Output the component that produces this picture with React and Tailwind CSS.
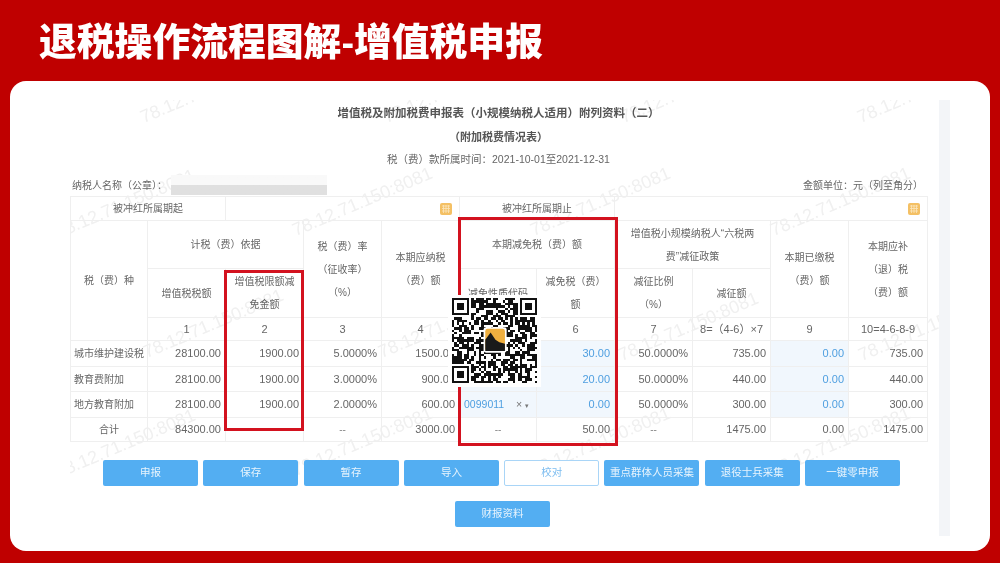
const FONT = "font-['Liberation_Sans','Noto_Sans_CJK_SC',sans-serif]"

const marks = [
  [75, 27], [318, 27], [555, 27], [792, 27],
  [-10, 142], [227, 140], [465, 140], [705, 140],
  [78, 262], [313, 262], [553, 265], [793, 265],
  [-10, 382], [227, 380], [465, 380], [705, 380],
]

const rows = [
  { name: "城市维护建设税", base: "28100.00", limit: "1900.00", rate: "5.0000%", due: "1500.00", code: "", cut: "30.00", ratio: "50.0000%", less: "735.00", paid: "0.00", left: "735.00" },
  { name: "教育费附加", base: "28100.00", limit: "1900.00", rate: "3.0000%", due: "900.00", code: "", cut: "20.00", ratio: "50.0000%", less: "440.00", paid: "0.00", left: "440.00" },
  { name: "地方教育附加", base: "28100.00", limit: "1900.00", rate: "2.0000%", due: "600.00", code: "0099011", cut: "0.00", ratio: "50.0000%", less: "300.00", paid: "0.00", left: "300.00" },
]

const buttons = ["申报", "保存", "暂存", "导入", "校对", "重点群体人员采集", "退役士兵采集", "一键零申报"]

// fake qr modules, same every render
const QR_SIZE = 35
function qrCells() {
  const cells = []
  let seed = 7919
  for (let y = 0; y < QR_SIZE; y++) {
    for (let x = 0; x < QR_SIZE; x++) {
      seed = (seed * 1103515245 + 12345) & 0x7fffffff
      const inFinder = (x < 8 && y < 8) || (x >= QR_SIZE - 8 && y < 8) || (x < 8 && y >= QR_SIZE - 8)
      if (!inFinder && (seed >> 16) % 100 < 56) cells.push(`M${x} ${y}h1v1h-1z`)
    }
  }
  return cells.join("")
}

function Finder({ x, y }) {
  return (
    <g>
      <rect x={x} y={y} width="7" height="7" fill="#111" />
      <rect x={x + 1} y={y + 1} width="5" height="5" fill="#fff" />
      <rect x={x + 2} y={y + 2} width="3" height="3" fill="#111" />
    </g>
  )
}

function QrCode() {
  return (
    <svg viewBox={`0 0 ${QR_SIZE} ${QR_SIZE}`} className="block h-[85px] w-[85px] blur-[0.3px]" shapeRendering="crispEdges">
      <path d={qrCells()} fill="#111" />
      <Finder x={0} y={0} />
      <Finder x={QR_SIZE - 7} y={0} />
      <Finder x={0} y={QR_SIZE - 7} />
      <g shapeRendering="auto">
        <rect x="13" y="12" width="9.5" height="10.5" rx="1" fill="#fff" />
        <rect x="13.7" y="12.7" width="8.1" height="9.1" rx="1" fill="#f0b040" />
        <path d="M13.7 21.800v-4.600l2.200-3 2 3 1.600 1 2.300.6v3z" fill="#1a1a1a" />
      </g>
    </svg>
  )
}

function CalendarIcon() {
  return (
    <svg viewBox="0 0 12 12" className="h-3 w-3">
      <rect width="12" height="12" rx="2" fill="#f4c064" />
      <path d="M2 3h8M2 5.500h8M2 8h8M3.500 2v8M6 2v8M8.500 2v8" stroke="#fbe6bd" strokeWidth="0.8" />
    </svg>
  )
}

function Head({ children, className = "", ...props }) {
  return (
    <td {...props} className={`border border-[#efefef] px-1 text-center align-middle text-[10px] leading-[23px] font-normal text-[#666] ${className}`}>
      {children}
    </td>
  )
}

function Num({ children }) {
  return (
    <td className="border border-[#efefef] pr-1 text-right align-middle text-[11px] text-[#666]">
      {children}
    </td>
  )
}

function Input({ children }) {
  return (
    <td className="border border-[#efefef] bg-[#f1f7fd] pr-1 text-right align-middle text-[11px] text-[#4f9fe0]">
      {children}
    </td>
  )
}

export default function App() {
  return (
    <div className={`flex h-[563px] w-[1000px] flex-col overflow-hidden bg-[#bf0000] ${FONT}`}>
      <header className="flex h-[81px] items-center pt-[5px] pl-[39px]">
        <h1 className="text-[37.800px] leading-none font-black text-white blur-[0.3px]">退税操作流程图解-增值税申报</h1>
      </header>

      <main className="relative mx-[10px] h-[470px] overflow-hidden rounded-2xl bg-white">
        {/* watermark */}
        <div className="pointer-events-none absolute top-[19px] left-[60px] h-[436px] w-[880px] overflow-hidden blur-[0.4px]">
          {marks.map(([x, y]) => (
            <span
              key={`${x}-${y}`}
              className="absolute origin-bottom-left -rotate-[23deg] text-[18px] leading-5 whitespace-nowrap text-[#f0f0f0]"
              style={{ left: x, top: y - 20 }}
            >
              78.12.71.150:8081
            </span>
          ))}
        </div>

        <div className="relative flex gap-[12px] pt-[19px] pl-[60px]">
          <div className="w-[857px] blur-[0.5px]">
            <div className="flex h-[28px] items-center justify-center text-[11.500px] font-bold text-[#555]">
              增值税及附加税费申报表（小规模纳税人适用）附列资料（二）
            </div>
            <div className="flex h-[18px] items-center justify-center text-[11px] font-bold text-[#555]">（附加税费情况表）</div>
            <div className="flex h-[28px] items-center justify-center text-[10.500px] text-[#666]">
              税（费）款所属时间：2021-10-01至2021-12-31
            </div>
            <div className="flex h-[22px] items-center justify-between pr-[4px] pl-[2px] text-[10px] text-[#666]">
              <div className="flex items-center gap-[4px]">
                <span>纳税人名称（公章）：</span>
                <div className="h-[20px] w-[156px] bg-gradient-to-b from-[#f9f9f9] from-50% to-[#e0e0e0] to-50%" />
              </div>
              <span>金额单位：元（列至角分）</span>
            </div>

            <table className="w-[857px] table-fixed border-collapse">
              <colgroup>
                <col className="w-[77px]" />
                <col className="w-[78px]" />
                <col className="w-[78px]" />
                <col className="w-[78px]" />
                <col className="w-[78px]" />
                <col className="w-[77px]" />
                <col className="w-[78px]" />
                <col className="w-[78px]" />
                <col className="w-[78px]" />
                <col className="w-[78px]" />
                <col className="w-[79px]" />
              </colgroup>
              <tbody>
                <tr className="h-[24px]">
                  <Head colSpan={2}>被冲红所属期起</Head>
                  <td colSpan={3} className="border border-[#efefef] pr-[7px] align-middle">
                    <div className="flex justify-end"><CalendarIcon /></div>
                  </td>
                  <Head colSpan={2}>被冲红所属期止</Head>
                  <td colSpan={4} className="border border-y-[#efefef] border-r-[#efefef] border-l-transparent pr-[7px] align-middle">
                    <div className="flex justify-end"><CalendarIcon /></div>
                  </td>
                </tr>
                <tr className="h-[48px]">
                  <Head rowSpan={3}>税（费）种</Head>
                  <Head colSpan={2}>计税（费）依据</Head>
                  <Head rowSpan={2}>税（费）率<br />（征收率）<br />（%）</Head>
                  <Head rowSpan={2}>本期应纳税<br />（费）额</Head>
                  <Head colSpan={2}>本期减免税（费）额</Head>
                  <Head colSpan={2}>增值税小规模纳税人“六税两<br />费”减征政策</Head>
                  <Head rowSpan={2}>本期已缴税<br />（费）额</Head>
                  <Head rowSpan={2}>本期应补<br />（退）税<br />（费）额</Head>
                </tr>
                <tr className="h-[49px]">
                  <Head>增值税税额</Head>
                  <Head>增值税限额减<br />免金额</Head>
                  <Head>减免性质代码</Head>
                  <Head>减免税（费）<br />额</Head>
                  <Head>减征比例<br />（%）</Head>
                  <Head>减征额</Head>
                </tr>
                <tr className="h-[23px]">
                  {["1", "2", "3", "4", "5", "6", "7", "8=（4-6）×7", "9", "10=4-6-8-9"].map((n) => (
                    <td key={n} className="border border-[#efefef] text-center align-middle text-[11px] text-[#666]">{n}</td>
                  ))}
                </tr>
                {rows.map((r, i) => (
                  <tr key={r.name} className={i === 1 ? "h-[25px]" : "h-[26px]"}>
                    <td className="border border-[#efefef] pl-[3px] align-middle text-[10px] whitespace-nowrap text-[#666]">{r.name}</td>
                    <Num>{r.base}</Num>
                    <Num>{r.limit}</Num>
                    <Num>{r.rate}</Num>
                    <Num>{r.due}</Num>
                    <td className="border border-[#efefef] bg-[#f1f7fd] px-[4px] align-middle text-[10.500px] text-[#4f9fe0]">
                      {r.code && (
                        <div className="flex items-center justify-between">
                          <span>{r.code}</span>
                          <span className="pr-[3px] text-[#777]">× <span className="text-[7px]">▾</span></span>
                        </div>
                      )}
                    </td>
                    <Input>{r.cut}</Input>
                    <Num>{r.ratio}</Num>
                    <Num>{r.less}</Num>
                    <Input>{r.paid}</Input>
                    <Num>{r.left}</Num>
                  </tr>
                ))}
                <tr className="h-[24px]">
                  <td className="border border-[#efefef] text-center align-middle text-[10px] text-[#666]">合计</td>
                  <Num>84300.00</Num>
                  <Num />
                  <td className="border border-[#efefef] text-center align-middle text-[10px] text-[#888]">--</td>
                  <Num>3000.00</Num>
                  <td className="border border-[#efefef] text-center align-middle text-[10px] text-[#888]">--</td>
                  <Num>50.00</Num>
                  <td className="border border-[#efefef] text-center align-middle text-[10px] text-[#888]">--</td>
                  <Num>1475.00</Num>
                  <Num>0.00</Num>
                  <Num>1475.00</Num>
                </tr>
              </tbody>
            </table>

            <div className="mt-[18px] ml-[33px] flex gap-[5.300px]">
              {buttons.map((b) => (
                <button
                  key={b}
                  className={
                    b === "校对"
                      ? "h-[26px] w-[95px] rounded-[2px] border border-[#a9d5f7] bg-white text-[10.500px] text-[#7dbdf0]"
                      : "h-[26px] w-[95px] rounded-[2px] bg-[#53aef2] text-[10.500px] text-[#e8f4fd]"
                  }
                >
                  {b}
                </button>
              ))}
            </div>
            <div className="mt-[14px] ml-[385px]">
              <button className="h-[26px] w-[95px] rounded-[2px] bg-[#53aef2] text-[10.500px] text-[#e8f4fd]">财报资料</button>
            </div>
          </div>
          <div className="h-[436px] w-[11px] bg-[#f3f5f8]" />
        </div>

        {/* red highlight boxes and the qr sit over the table */}
        <div className="absolute top-[189px] left-[214px] h-[161px] w-[80px] border-[3px] border-[#d3121f] blur-[0.3px]" />
        <div className="absolute top-[136px] left-[448px] h-[229px] w-[160px] border-[3px] border-[#d3121f] blur-[0.3px]" />
        <div className="absolute top-[214px] left-[438px] bg-white p-[4px] pt-[3px]">
          <QrCode />
        </div>
      </main>
    </div>
  )
}
